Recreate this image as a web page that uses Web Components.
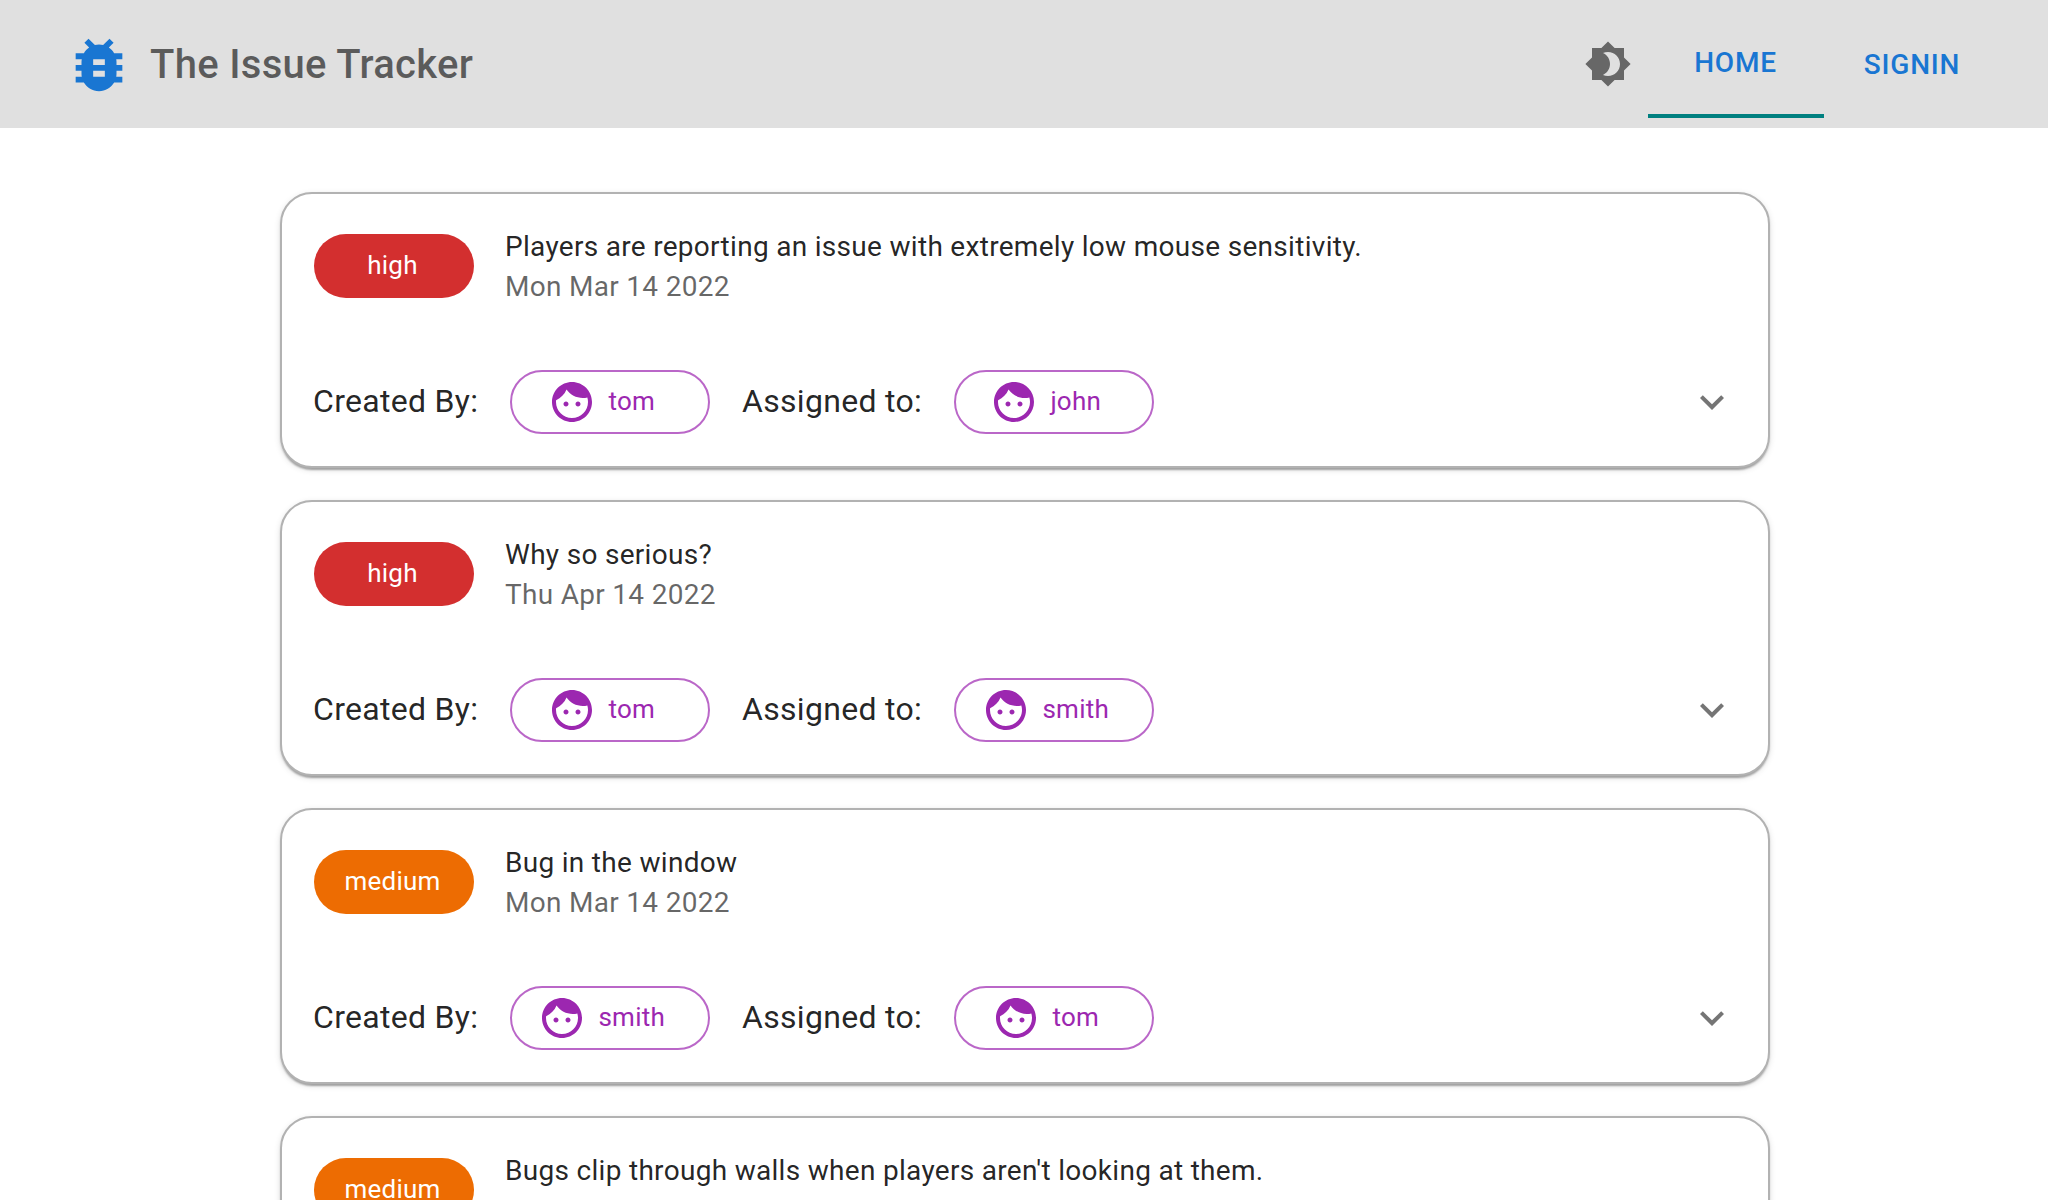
<!DOCTYPE html>
<html lang="en">
<head>
<meta charset="utf-8">
<title>The Issue Tracker</title>
<style>
html,body{margin:0;height:1200px;overflow:hidden;background:#fff}
body{font-family:Roboto,"Liberation Sans",sans-serif;color:rgba(0,0,0,.87)}
main{display:flex;flex-direction:column;gap:32px;width:1490px;margin:64px 0 0 280px}
</style>
</head>
<body>
<app-bar>The Issue Tracker</app-bar>
<main>
<issue-card level="high" creator="tom" assignee="john" date="Mon Mar 14 2022">Players are reporting an issue with extremely low mouse sensitivity.</issue-card>
<issue-card level="high" creator="tom" assignee="smith" date="Thu Apr 14 2022">Why so serious?</issue-card>
<issue-card level="medium" creator="smith" assignee="tom" date="Mon Mar 14 2022">Bug in the window</issue-card>
<issue-card level="medium">Bugs clip through walls when players aren't looking at them.</issue-card>
</main>
<script>
const ICONS = {
  bug: 'M20 8h-2.81c-.45-.78-1.07-1.45-1.82-1.96L17 4.41 15.59 3l-2.17 2.17C12.96 5.06 12.49 5 12 5c-.49 0-.96.06-1.41.17L8.41 3 7 4.41l1.62 1.63C7.88 6.55 7.26 7.22 6.81 8H4v2h2.09c-.05.33-.09.66-.09 1v1H4v2h2v1c0 .34.04.67.09 1H4v2h2.81c1.04 1.79 2.97 3 5.19 3s4.15-1.21 5.19-3H20v-2h-2.09c.05-.33.09-.66.09-1v-1h2v-2h-2v-1c0-.34-.04-.67-.09-1H20V8zm-6 8h-4v-2h4v2zm0-4h-4v-2h4v2z',
  theme: 'M20 8.69V4h-4.69L12 .69 8.69 4H4v4.69L.69 12 4 15.31V20h4.69L12 23.31 15.31 20H20v-4.69L23.31 12 20 8.69zM12 18c-.89 0-1.74-.2-2.5-.55C11.56 16.5 13 14.42 13 12s-1.44-4.5-3.5-5.45C10.26 6.2 11.11 6 12 6c3.31 0 6 2.69 6 6s-2.69 6-6 6z',
  face: 'M9 11.75c-.69 0-1.25.56-1.25 1.25s.56 1.25 1.25 1.25 1.25-.56 1.25-1.25-.56-1.25-1.25-1.25zm6 0c-.69 0-1.25.56-1.25 1.25s.56 1.25 1.25 1.25 1.25-.56 1.25-1.25-.56-1.25-1.25-1.25zM12 2C6.48 2 2 6.48 2 12s4.48 10 10 10 10-4.48 10-10S17.52 2 12 2zm0 18c-4.41 0-8-3.59-8-8 0-.29.02-.58.05-.86 2.36-1.05 4.23-2.98 5.21-5.37C11.07 8.33 14.05 10 17.42 10c.78 0 1.53-.09 2.25-.26.21.71.33 1.47.33 2.26 0 4.41-3.59 8-8 8z',
  more: 'M16.59 8.59 12 13.17 7.41 8.59 6 10l6 6 6-6z'
};
const define = (name, render) => customElements.define(name, class extends HTMLElement {
  connectedCallback() {
    if (!this.shadowRoot) this.attachShadow({ mode: 'open' }).innerHTML = render(this);
  }
});

define('mat-icon', el => `
<style>:host{display:block;flex:none;width:48px;height:48px}svg{display:block;width:100%;height:100%;fill:currentColor}</style>
<svg viewBox="0 0 24 24"><path d="${ICONS[el.getAttribute('name')]}"/></svg>`);

define('nav-tab', el => `
<style>
:host{display:flex;align-items:center;justify-content:center;box-sizing:border-box;width:176px;height:96px;
font-weight:500;font-size:28px;line-height:35px;letter-spacing:.02857em;color:#1976d2;text-transform:uppercase}
:host([selected]){height:108px;border-bottom:4px solid #008080;padding-right:1px}
</style><slot></slot>`);

define('app-bar', () => `
<style>
:host{display:flex;align-items:center;justify-content:space-between;height:128px;box-sizing:border-box;padding:0 48px 0 64px;background:#e0e0e0}
.brand,nav{display:flex;align-items:center}
.brand{gap:16px;color:rgba(0,0,0,.6)}
.brand mat-icon{width:70px;height:70px;color:#1976d2;margin-top:2px}
h1{margin:2px 0 0;font-weight:500;font-size:40px;line-height:64px;letter-spacing:.0075em}
nav{color:rgba(0,0,0,.54);height:128px}
.theme{margin-right:16px}
</style>
<div class="brand"><mat-icon name="bug"></mat-icon><h1><slot></slot></h1></div>
<nav><mat-icon class="theme" name="theme"></mat-icon><nav-tab selected>Home</nav-tab><nav-tab>Signin</nav-tab></nav>`);

define('level-chip', el => `
<style>
:host{display:flex;align-items:center;justify-content:center;flex:none;box-sizing:border-box;width:160px;height:64px;padding:0 3px 1px 0;border-radius:32px;
background:#d32f2f;color:#fff;font-size:26px;line-height:39px;letter-spacing:.00938em}
:host([level=medium]){background:#ed6c02}
</style><slot></slot>`);

define('user-chip', el => `
<style>
:host{display:flex;align-items:center;justify-content:center;flex:none;box-sizing:border-box;width:200px;height:64px;border-radius:32px;
border:2px solid rgba(156,39,176,.7);color:#9c27b0;font-size:26px;line-height:39px;letter-spacing:.00938em}
mat-icon{margin:0 -11.5px 0 7px}
span{padding:0 24px 1px}
</style><mat-icon name="face"></mat-icon><span><slot></slot></span>`);

define('issue-card', el => {
  const a = n => el.getAttribute(n);
  return `
<style>
:host{display:flex;flex-direction:column;justify-content:space-between;box-sizing:border-box;height:276px;flex:none;padding:32px;
border:2px solid #b2b2b2;border-radius:32px;background:#fff;
box-shadow:0 4px 2px -2px rgba(0,0,0,.2),0 2px 2px rgba(0,0,0,.14),0 2px 6px rgba(0,0,0,.12)}
header{display:flex;gap:31px;align-items:flex-start}
level-chip{margin-top:8px}
.text{margin-top:1px;font-size:28px;line-height:40px;letter-spacing:.01071em}
.date{color:rgba(0,0,0,.6)}
footer{display:flex;align-items:center;gap:32px;font-size:32px;line-height:48px;letter-spacing:.00938em}
footer span{box-sizing:border-box;width:180px;padding-bottom:2px;white-space:nowrap}
footer span:first-child{width:165px;margin-left:-1px}
.more{margin:0 0 0 auto;color:rgba(0,0,0,.54)}
</style>
<header><level-chip level="${a('level')}">${a('level')}</level-chip>
<div class="text"><div><slot></slot></div>${a('date') ? `<div class="date">${a('date')}</div>` : ''}</div></header>
${a('creator') ? `<footer><span>Created By:</span><user-chip>${a('creator')}</user-chip><span>Assigned to:</span><user-chip>${a('assignee')}</user-chip><mat-icon class="more" name="more"></mat-icon></footer>` : ''}`;
});
</script>
</body>
</html>
